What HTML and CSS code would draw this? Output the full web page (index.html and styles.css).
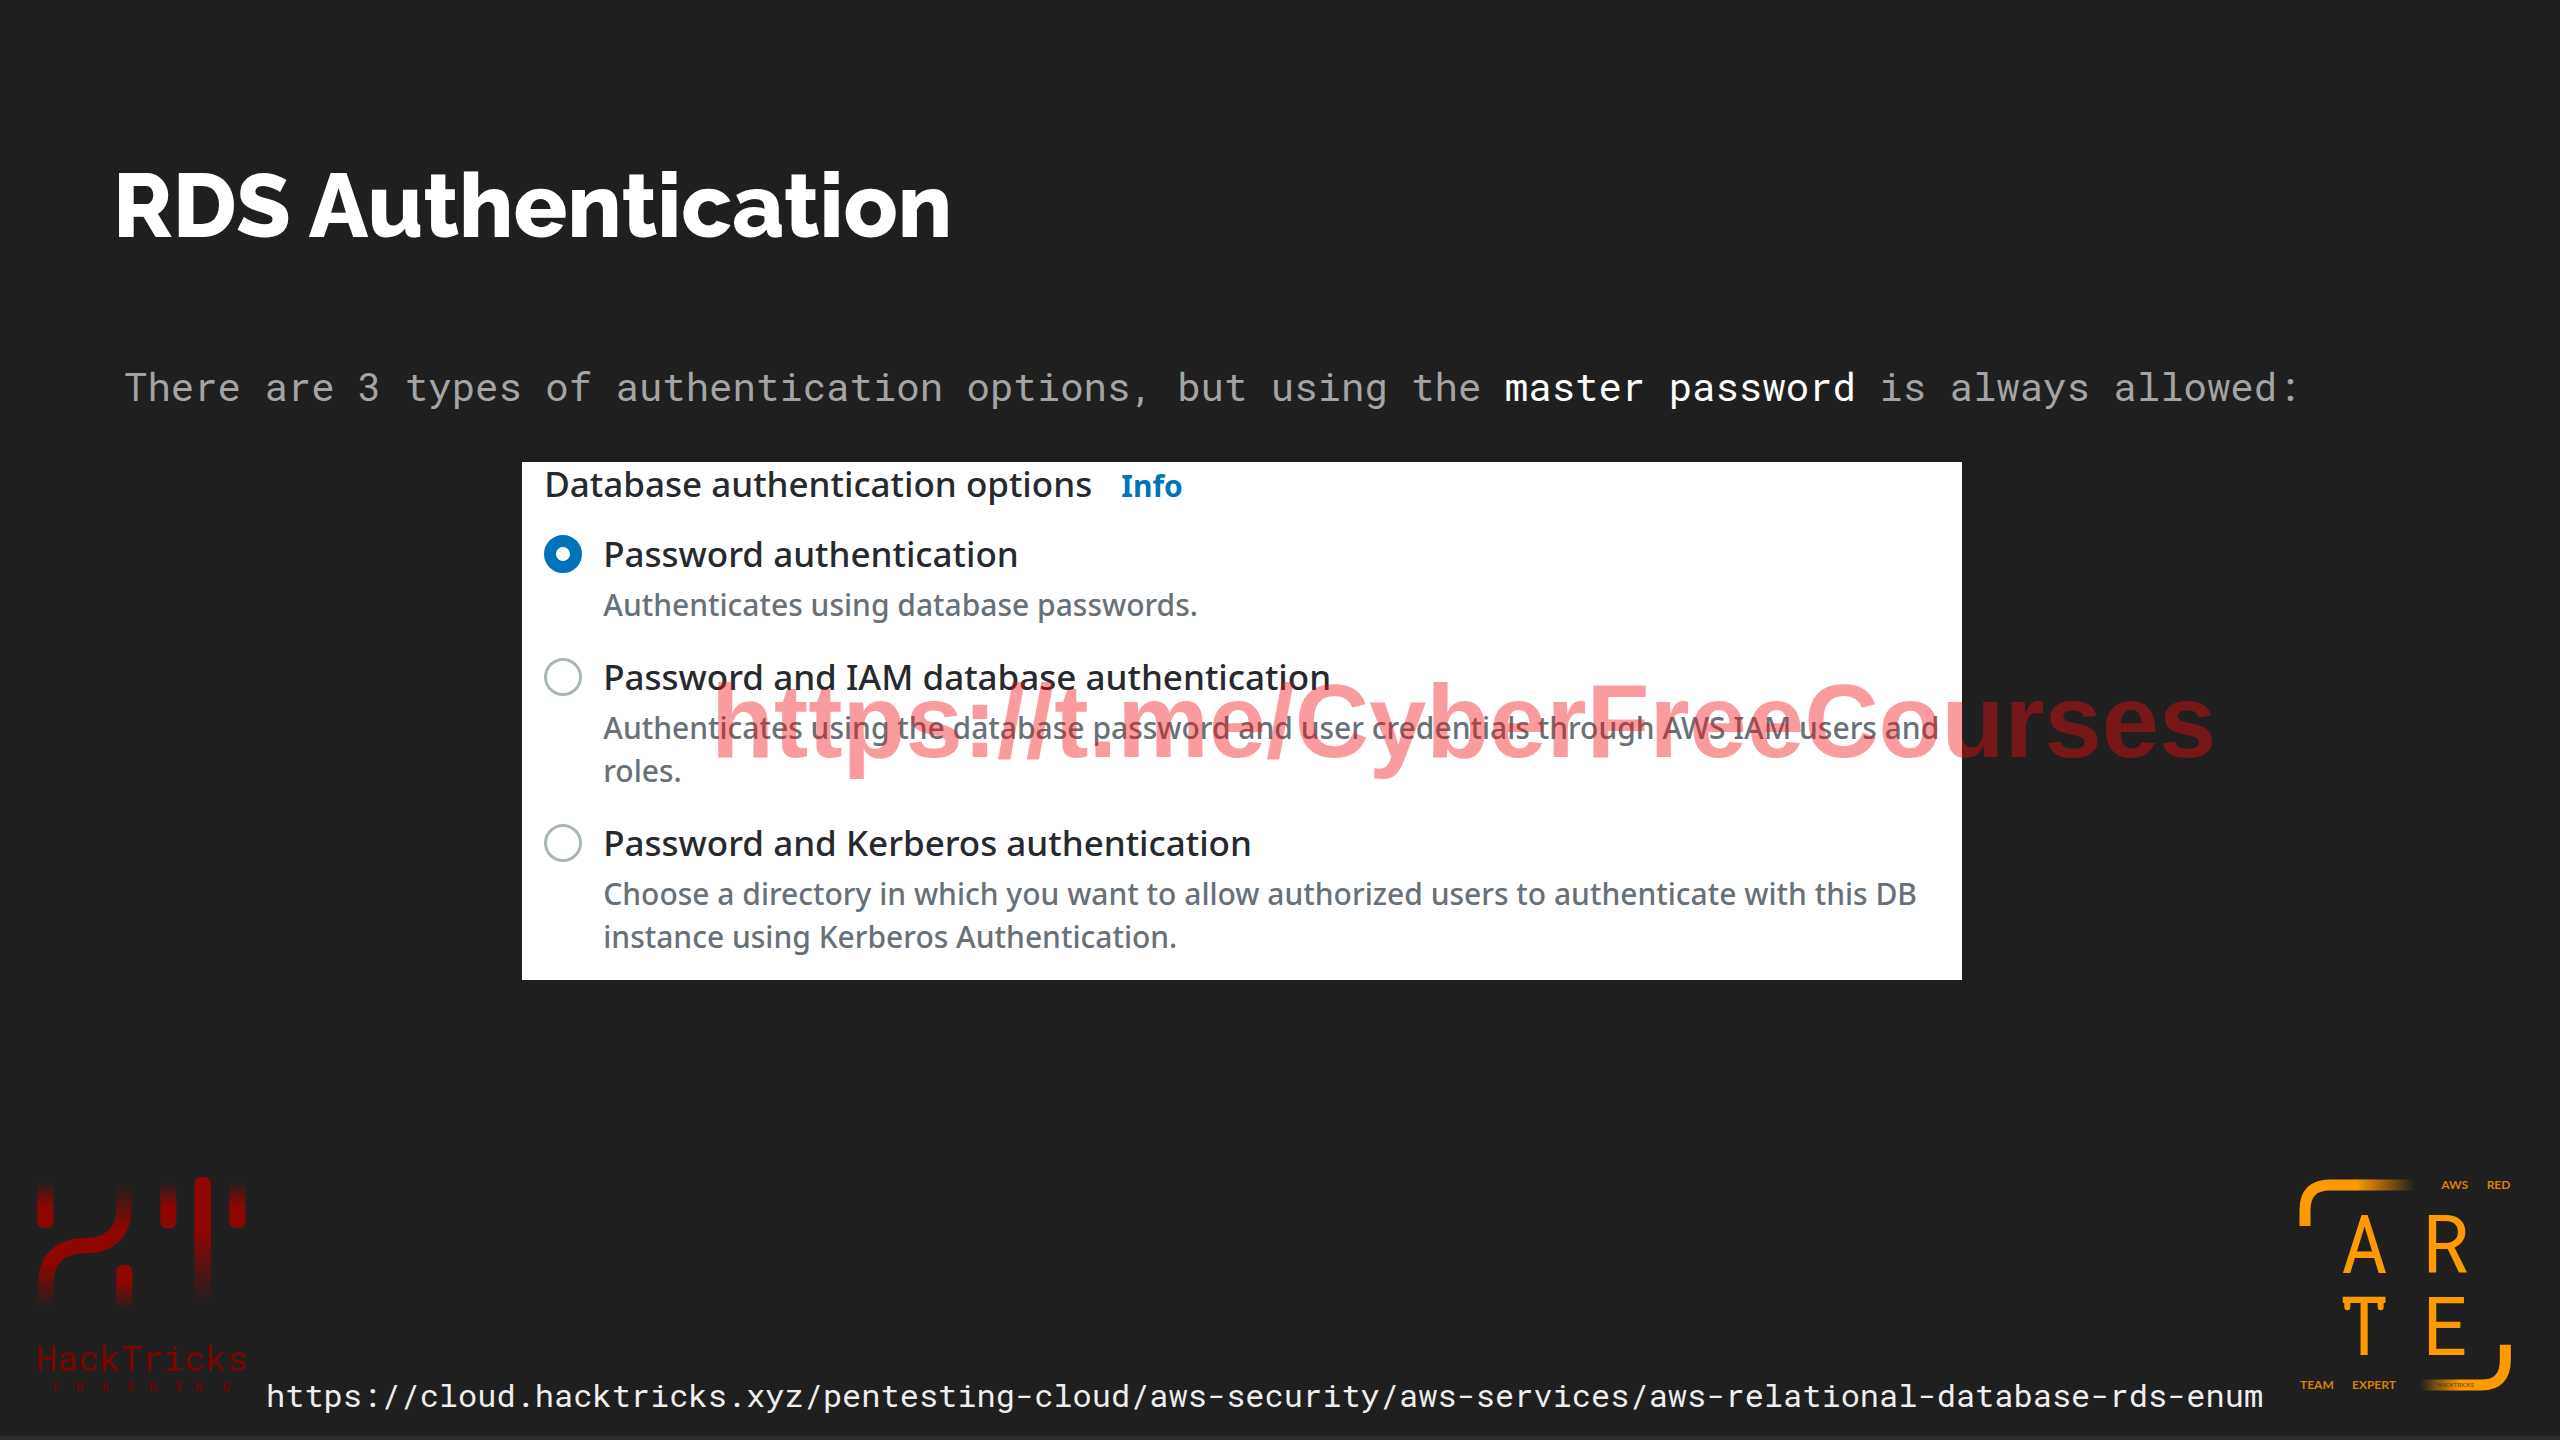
FILE: index.html
```html
<!DOCTYPE html>
<html lang="en">
<head>
    <meta charset="UTF-8">
    <meta name="viewport" content="width=device-width, initial-scale=1.0">
    <title>RDS Authentication</title>
    <link rel="stylesheet" href="styles.css">
</head>
<body>
    <main class="slide">
        <h1>RDS Authentication</h1>
        <p class="intro">There are 3 types of authentication options, but using the <strong>master password</strong> is always allowed:</p>

        <form class="panel">
            <div class="panel-title">Database authentication options <a href="#">Info</a></div>
            <div class="option">
                <input type="radio" name="auth" id="auth-password" checked>
                <label for="auth-password">Password authentication</label>
                <p>Authenticates using database passwords.</p>
            </div>
            <div class="option">
                <input type="radio" name="auth" id="auth-iam">
                <label for="auth-iam">Password and IAM database authentication</label>
                <p>Authenticates using the database password and user credentials through AWS IAM users and roles.</p>
            </div>
            <div class="option">
                <input type="radio" name="auth" id="auth-kerberos">
                <label for="auth-kerberos">Password and Kerberos authentication</label>
                <p>Choose a directory in which you want to allow authorized users to authenticate with this DB instance using Kerberos Authentication.</p>
            </div>
        </form>
    </main>

    <footer class="footer">
        <svg class="logo" viewBox="90 60 660 690">
            <defs>
                <linearGradient id="fade-up" x1="0" y1="95" x2="0" y2="170" gradientUnits="userSpaceOnUse">
                    <stop offset="0" stop-color="#8f0500" stop-opacity="0"/>
                    <stop offset="1" stop-color="#8f0500"/>
                </linearGradient>
                <linearGradient id="fade-down" x1="0" y1="400" x2="0" y2="475" gradientUnits="userSpaceOnUse">
                    <stop offset="0" stop-color="#8f0500"/>
                    <stop offset="1" stop-color="#8f0500" stop-opacity="0"/>
                </linearGradient>
                <linearGradient id="fade-stem" x1="0" y1="240" x2="0" y2="460" gradientUnits="userSpaceOnUse">
                    <stop offset="0" stop-color="#8f0500"/>
                    <stop offset="1" stop-color="#8f0500" stop-opacity="0"/>
                </linearGradient>
                <linearGradient id="fade-both" x1="0" y1="100" x2="0" y2="470" gradientUnits="userSpaceOnUse">
                    <stop offset="0" stop-color="#8f0500" stop-opacity="0"/>
                    <stop offset=".38" stop-color="#8f0500"/>
                    <stop offset=".65" stop-color="#8f0500"/>
                    <stop offset="1" stop-color="#8f0500" stop-opacity="0"/>
                </linearGradient>
            </defs>
            <rect x="112" y="88" width="48" height="147" rx="20" fill="url(#fade-up)"/>
            <rect x="481" y="88" width="48" height="147" rx="20" fill="url(#fade-up)"/>
            <rect x="688" y="88" width="48" height="147" rx="20" fill="url(#fade-up)"/>
            <rect x="349" y="344" width="48" height="136" rx="20" fill="url(#fade-down)"/>
            <rect x="583" y="81" width="50" height="400" rx="20" fill="url(#fade-stem)"/>
            <path d="M138 480V395C138 330 180 287 255 287C330 287 372 245 372 170V90" fill="none" stroke="url(#fade-both)" stroke-width="46"/>
            <text class="ht-name" x="425" y="662">HackTricks</text>
            <text class="ht-sub" x="154 228 305 382 448 525 585 667" y="724">TRAINING</text>
        </svg>

        <a class="link" href="https://cloud.hacktricks.xyz/pentesting-cloud/aws-security/aws-services/aws-relational-database-rds-enum">https://cloud.hacktricks.xyz/pentesting-cloud/aws-security/aws-services/aws-relational-database-rds-enum</a>

        <svg class="logo" viewBox="105 60 660 690">
            <defs>
                <linearGradient id="arte-top" x1="290" y1="0" x2="465" y2="0" gradientUnits="userSpaceOnUse">
                    <stop offset="0" stop-color="#ff9900"/>
                    <stop offset="1" stop-color="#ff9900" stop-opacity="0"/>
                </linearGradient>
                <linearGradient id="arte-bottom" x1="480" y1="0" x2="600" y2="0" gradientUnits="userSpaceOnUse">
                    <stop offset="0" stop-color="#ff9900" stop-opacity="0"/>
                    <stop offset="1" stop-color="#ff9900"/>
                </linearGradient>
            </defs>
            <path d="M135 228V180Q135 105 210 105H465" fill="none" stroke="url(#arte-top)" stroke-width="33"/>
            <path d="M736 584V630Q736 705 665 705H480" fill="none" stroke="url(#arte-bottom)" stroke-width="33"/>
            <text class="arte" x="312" y="368">A</text>
            <text class="arte" x="558" y="368">R</text>
            <text class="arte" x="312" y="616">T</text>
            <text class="arte" x="558" y="616">E</text>
            <!-- short end strokes under the bar of the T -->
            <path d="M262 454V472M362 454V472" fill="none" stroke="#ff9900" stroke-width="18" stroke-linecap="round"/>
            <text class="arte-small" x="544" y="116">AWS</text>
            <text class="arte-small" x="680" y="116">RED</text>
            <text class="arte-small" x="120" y="718">TEAM</text>
            <text class="arte-small" x="276" y="718">EXPERT</text>
            <text class="arte-mark" x="532" y="712">HACKTRICKS</text>
        </svg>
    </footer>

    <div class="watermark">https://t.me/CyberFreeCourses</div>
</body>
</html>
```
FILE: styles.css
```css
* {
    box-sizing: border-box;
}
body {
    margin: 0;
    min-height: 100vh;
    display: flex;
    flex-direction: column;
    justify-content: space-between;
    position: relative;
    background: #1f1f1f;
    border-bottom: 4px solid #2c2c2c;
    color: #fff;
    font-family: "Noto Sans", sans-serif;
}
.slide {
    padding-top: 154px;
}
h1 {
    margin: 0 113px;
    font-family: Raleway, Lato, sans-serif;
    font-size: 89px;
    font-weight: 800;
    line-height: 104px;
}
.intro {
    margin: 98px 124px 46px;
    font-family: "Roboto Mono", "DejaVu Sans Mono", monospace;
    font-size: 39px;
    line-height: 60px;
    color: #a4a4a4;
}
.intro strong {
    font-weight: normal;
    color: #fff;
}
.panel {
    width: 56.25%;
    margin-left: 20.4%;
    padding: 0 14px 22px 22px;
    background: #fff;
    color: #26292e;
}
.panel-title {
    margin-bottom: 17px;
    font-size: 35px;
    font-weight: 500;
    line-height: 44px;
}
.panel-title a {
    margin-left: 20px;
    font-size: 30px;
    font-weight: 700;
    color: #0073bb;
    text-decoration: none;
}
.option {
    display: grid;
    grid-template-columns: 38px 1fr;
    column-gap: 21px;
    align-items: center;
}
.option + .option {
    margin-top: 22px;
}
.option input {
    appearance: none;
    width: 38px;
    height: 38px;
    margin: 0;
    border: 3px solid #aab7b8;
    border-radius: 50%;
    background: #fff;
}
.option input:checked {
    border: 12px solid #0073bb;
}
.option label {
    font-size: 35px;
    font-weight: 500;
    line-height: 58px;
}
.option p {
    grid-column: 2;
    margin: 0;
    font-size: 30px;
    font-weight: 500;
    line-height: 43px;
    color: #687078;
}
.footer {
    display: flex;
    align-items: flex-end;
    gap: 16px;
    padding: 0 45px 21px 30px;
}
.logo {
    width: 220px;
    height: 230px;
    margin-bottom: 15px;
    flex: none;
}
.link {
    flex: 1;
    font-family: "Roboto Mono", "DejaVu Sans Mono", monospace;
    font-size: 32px;
    line-height: 40px;
    color: #eee;
    text-decoration: none;
    white-space: nowrap;
}
.ht-name {
    font-family: "Roboto Mono", "DejaVu Sans Mono", monospace;
    font-size: 106px;
    fill: #780500;
    text-anchor: middle;
}
.ht-sub {
    font-family: "DejaVu Sans Mono", monospace;
    font-size: 36px;
    font-weight: 700;
    fill: #6a0500;
}
.arte {
    font-family: "Roboto Mono", "DejaVu Sans Mono", monospace;
    font-size: 243px;
    fill: #ff9900;
    text-anchor: middle;
}
.arte-small {
    font-family: Lato, sans-serif;
    font-size: 36px;
    font-weight: 700;
    fill: #d88200;
}
.arte-mark {
    font-family: Lato, sans-serif;
    font-size: 18px;
    fill: #5c3a08;
}
.watermark {
    position: absolute;
    top: 662px;
    left: 711px;
    font-family: "Liberation Sans", sans-serif;
    font-size: 103px;
    font-weight: 700;
    line-height: 120px;
    color: rgba(243, 12, 20, 0.41);
    pointer-events: none;
}
```
